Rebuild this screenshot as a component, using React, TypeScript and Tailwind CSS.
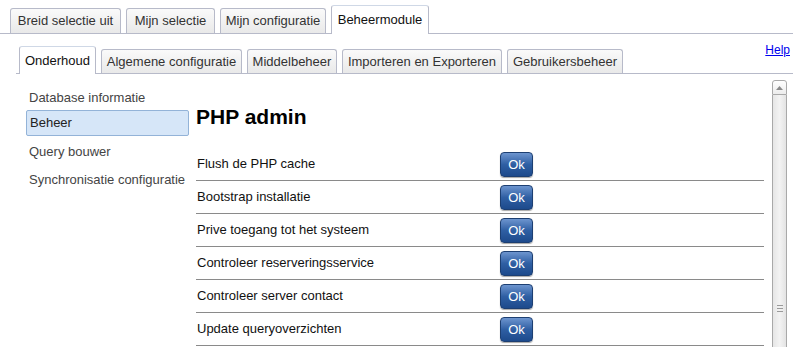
const topTabs = [
  { label: 'Breid selectie uit', w: 'w-[111px]' },
  { label: 'Mijn selectie', w: 'w-[89px]' },
  { label: 'Mijn configuratie', w: 'w-[106px]' },
];

const subTabs = [
  { label: 'Algemene configuratie', w: 'w-[141px]' },
  { label: 'Middelbeheer', w: 'w-[90px]' },
  { label: 'Importeren en Exporteren', w: 'w-[160px]' },
  { label: 'Gebruikersbeheer', w: 'w-[116px]' },
];

const actions = [
  'Flush de PHP cache',
  'Bootstrap installatie',
  'Prive toegang tot het systeem',
  'Controleer reserveringsservice',
  'Controleer server contact',
  'Update queryoverzichten',
];

function OkButton() {
  return (
    <button className="w-[33px] h-[25px] rounded-[4px] border border-[#1d3f72] bg-gradient-to-b from-[#6d95cf] via-[#2f5fa3] to-[#1d4a8c] text-white text-[13px] leading-none shadow-[0_1px_1px_rgba(0,0,0,0.35)]">
      Ok
    </button>
  );
}

export default function App() {
  return (
    <div className="w-[793px] h-[347px] overflow-hidden bg-white text-[13px] text-[#333] font-['Liberation_Sans',Arial,sans-serif]">
      {/* main tabs */}
      <div className="flex items-end gap-[5px] pl-[10px] pt-[5px] h-[34px] border-b border-[#b7bac9]">
        {topTabs.map((t) => (
          <div
            key={t.label}
            className={`${t.w} h-[25px] flex items-center justify-center border border-b-0 border-[#b7bac9] rounded-t-[3px] bg-gradient-to-b from-[#fafafa] to-[#e9e9e9]`}
          >
            {t.label}
          </div>
        ))}
        <div className="w-[98px] h-[29px] -mb-px flex items-center justify-center border border-b-0 border-[#b7bac9] border-t-[#cfd8e6] rounded-t-[3px] bg-white text-[#111]">
          Beheermodule
        </div>
      </div>

      {/* sub tabs */}
      <div className="flex items-end ml-[16px] pl-[3px] mt-[12px] h-[28px] border-b border-[#b7bac9]">
        <div className="flex items-end gap-[5px]">
          <div className="w-[77px] h-[28px] -mb-px flex items-center justify-center border border-b-0 border-[#b7bac9] border-t-[#cfd8e6] rounded-t-[3px] bg-white text-[#111]">
            Onderhoud
          </div>
          {subTabs.map((t) => (
            <div
              key={t.label}
              className={`${t.w} h-[24px] flex items-center justify-center border border-b-0 border-[#b7bac9] rounded-t-[3px] bg-gradient-to-b from-[#fafafa] to-[#e9e9e9]`}
            >
              {t.label}
            </div>
          ))}
        </div>
        <a href="#" className="ml-auto mr-[3px] self-start -mt-[5px] text-[12px] text-[#0000ee] underline">
          Help
        </a>
      </div>

      {/* body */}
      <div className="flex h-[273px]">
        <div className="w-[196px] shrink-0 pl-[26px] pt-[12px] flex flex-col text-[#444]">
          <div className="h-[24px] pl-[3px] flex items-center">Database informatie</div>
          <div className="w-[163px] h-[26px] pl-[3px] flex items-center rounded-[2px] border border-[#93b3d8] bg-[#d6e6f8] text-[#222]">
            Beheer
          </div>
          <div className="h-[24px] pl-[3px] mt-[4px] flex items-center">Query bouwer</div>
          <div className="h-[24px] pl-[3px] mt-[4px] flex items-center">Synchronisatie configuratie</div>
        </div>

        <div className="w-[568px] shrink-0 pt-[30px] text-[#111]">
          <h1 className="h-[26px] flex items-center text-[21px] font-bold text-black">PHP admin</h1>
          <div className="mt-[18px]">
            {actions.map((a) => (
              <div key={a} className="h-[33px] flex items-center border-b border-[#8a8a8a] pl-px">
                <span className="w-[303px]">{a}</span>
                <OkButton />
              </div>
            ))}
          </div>
        </div>

        {/* scrollbar */}
        <div className="ml-[8px] mt-[6px] w-[15px] flex flex-col">
          <div className="h-[15px] flex items-center justify-center rounded-t-[3px] border border-[#a9a9a9] bg-gradient-to-b from-white to-[#ececec]">
            <svg width="7" height="4" viewBox="0 0 7 4">
              <path d="M0 4 L3.5 0 L7 4 Z" fill="#8a8a8a" />
            </svg>
          </div>
          <div className="flex-1 relative border-x border-[#a9a9a9] bg-gradient-to-r from-[#e6e6e6] via-[#f3f3f3] to-[#e3e3e3]">
            <svg className="absolute left-[4px] top-[210px]" width="6" height="7" viewBox="0 0 6 7">
              <path d="M0 0.5 H6 M0 3.5 H6 M0 6.5 H6" stroke="#9a9a9a" strokeWidth="1" />
            </svg>
          </div>
        </div>
      </div>
    </div>
  );
}
